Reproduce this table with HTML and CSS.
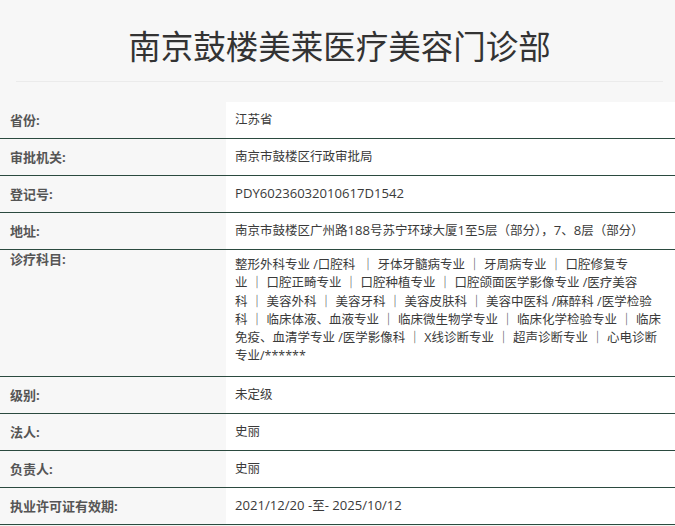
FILE: index.html
```html
<!DOCTYPE html>
<html lang="zh-CN">
<head>
<meta charset="utf-8">
<title>南京鼓楼美莱医疗美容门诊部</title>
<link rel="stylesheet" href="styles.css">
</head>
<body>
<div class="page">
  <header class="head">
    <h1 class="title">南京鼓楼美莱医疗美容门诊部</h1>
  </header>
  <div class="info">
    <div class="row">
      <div class="label">省份:</div>
      <div class="value">江苏省</div>
    </div>
    <div class="row">
      <div class="label">审批机关:</div>
      <div class="value">南京市鼓楼区行政审批局</div>
    </div>
    <div class="row">
      <div class="label">登记号:</div>
      <div class="value"><span class="latin">PDY60236032010617D1542</span></div>
    </div>
    <div class="row">
      <div class="label">地址:</div>
      <div class="value">南京市鼓楼区广州路<span class="latin">188</span>号苏宁环球大厦<span class="latin">1</span>至<span class="latin">5</span>层（部分），<span class="latin">7</span>、<span class="latin">8</span>层（部分）</div>
    </div>
    <div class="row row-tall">
      <div class="label">诊疗科目:</div>
      <div class="value">整形外科专业 /口腔科&nbsp;&nbsp;｜&nbsp;牙体牙髓病专业&nbsp;｜&nbsp;牙周病专业&nbsp;｜&nbsp;口腔修复专业&nbsp;｜&nbsp;口腔正畸专业&nbsp;｜&nbsp;口腔种植专业&nbsp;｜&nbsp;口腔颌面医学影像专业 /医疗美容科&nbsp;｜&nbsp;美容外科&nbsp;｜&nbsp;美容牙科&nbsp;｜&nbsp;美容皮肤科&nbsp;｜&nbsp;美容中医科 /麻醉科 /医学检验科&nbsp;｜&nbsp;临床体液、血液专业&nbsp;｜&nbsp;临床微生物学专业&nbsp;｜&nbsp;临床化学检验专业&nbsp;｜&nbsp;临床免疫、血清学专业 /医学影像科&nbsp;｜&nbsp;X线诊断专业&nbsp;｜&nbsp;超声诊断专业&nbsp;｜&nbsp;心电诊断专业/******</div>
    </div>
    <div class="row">
      <div class="label">级别:</div>
      <div class="value">未定级</div>
    </div>
    <div class="row">
      <div class="label">法人:</div>
      <div class="value">史丽</div>
    </div>
    <div class="row">
      <div class="label">负责人:</div>
      <div class="value">史丽</div>
    </div>
    <div class="row">
      <div class="label">执业许可证有效期:</div>
      <div class="value"><span class="latin">2021/12/20 -</span>至<span class="latin">- 2025/10/12</span></div>
    </div>
  </div>
  <div class="foot"></div>
</div>
</body>
</html>
```

FILE: styles.css
```css
html, body {
  margin: 0;
  padding: 0;
  background: #f7f7f7;
}
body {
  font-family: "Open Sans", "Noto Sans CJK SC", sans-serif;
  color: #333;
}
.page {
  width: 675px;
  background: #f7f7f7;
}
.head {
  margin: 0 12px 0 16px;
  height: 81px;
  border-bottom: 1px solid #ebebeb;
  display: flex;
  align-items: center;
  justify-content: center;
}
.title {
  margin: 0;
  padding-top: 9px;
  font-family: "Noto Sans CJK SC", sans-serif;
  font-weight: 400;
  font-size: 32.5px;
  line-height: 38px;
  color: #333;
}
.info {
  margin-top: 20px;
}
.row {
  display: flex;
  height: 36px;
  border-bottom: 1px solid #2b4a3f;
  font-size: 13px;
}
.label {
  width: 216px;
  flex: none;
  padding-left: 10px;
  line-height: 36px;
  font-weight: 700;
  color: #555;
}
.value {
  flex: 1;
  background: #fff;
  padding: 0 7px 0 9px;
  font-size: 12.5px;
  line-height: 36px;
  color: #3a3a3a;
}
.latin {
  font-size: 13.1px;
  line-height: 1;
}
.row-tall {
  height: auto;
}
.row-tall .label {
  line-height: 18px;
}
.row-tall .value {
  line-height: 18.3px;
  padding-top: 6px;
  padding-bottom: 10px;
  min-height: 110px;
}
.foot {
  height: 12px;
  background: #eef7f2;
}
```
